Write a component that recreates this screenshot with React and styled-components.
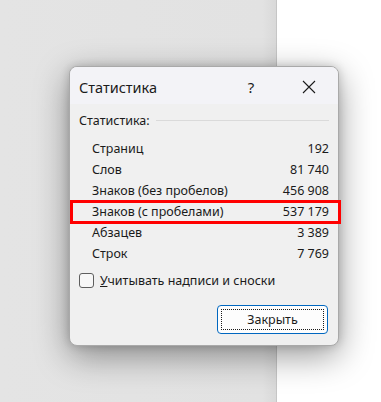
import React from "react";
import styled, { createGlobalStyle } from "styled-components";

const GlobalStyle = createGlobalStyle`
  html, body {
    margin: 0;
    padding: 0;
    width: 381px;
    height: 402px;
    overflow: hidden;
  }
  body {
    font-family: "Noto Sans", "Open Sans", sans-serif;
    color: #1b1b1b;
  }
`;

const stats = [
  { label: "Страниц", value: "192" },
  { label: "Слов", value: "81 740" },
  { label: "Знаков (без пробелов)", value: "456 908" },
  { label: "Знаков (с пробелами)", value: "537 179", marked: true },
  { label: "Абзацев", value: "3 389" },
  { label: "Строк", value: "7 769" },
];

const App = () => {
  return (
    <Page>
      <GlobalStyle />
      <DocArea />
      <Margin />
      <Dialog>
        <TitleBar>
          <Title>Статистика</Title>
          <TitleButton aria-label="help">?</TitleButton>
          <TitleButton aria-label="close">
            <svg width="14" height="14" viewBox="0 0 14 14">
              <path d="M1 1 L13 13 M13 1 L1 13" stroke="#1b1b1b" strokeWidth="1.1" />
            </svg>
          </TitleButton>
        </TitleBar>
        <Body>
          <Group>
            <GroupLabel>Статистика:</GroupLabel>
            <GroupLine />
          </Group>
          <StatList>
            {stats.map((s) => (
              <StatRow key={s.label} $marked={s.marked}>
                <span>{s.label}</span>
                <span>{s.value}</span>
              </StatRow>
            ))}
          </StatList>
          <CheckRow>
            <CheckBox />
            <span>
              <u>У</u>читывать надписи и сноски
            </span>
          </CheckRow>
          <Footer>
            <CloseButton>
              <FocusRing>Закрыть</FocusRing>
            </CloseButton>
          </Footer>
        </Body>
      </Dialog>
    </Page>
  );
};

const Page = styled.div`
  position: relative;
  display: flex;
  width: 381px;
  height: 402px;
  background: #ffffff;
`;

const DocArea = styled.div`
  width: 276px;
  height: 100%;
  background: linear-gradient(to right, #e4e4e4 0%, #e2e2e2 95%, #d9d9d9 100%);
  border-right: 1px solid #c6c6c6;
`;

const Margin = styled.div`
  flex: 1;
  background: #ffffff;
`;

const Dialog = styled.div`
  position: absolute;
  left: 69px;
  top: 66px;
  width: 270px;
  height: 280px;
  border-radius: 8px;
  background: #f0f0f0;
  border: 1px solid #a9a9a9;
  box-sizing: border-box;
  box-shadow: 0 10px 34px rgba(0, 0, 0, 0.4), 0 0 10px rgba(0, 0, 0, 0.18);
  display: flex;
  flex-direction: column;
`;

const TitleBar = styled.div`
  height: 37px;
  display: flex;
  align-items: center;
  background: #f3f3f7;
  padding-left: 9px;
  border-radius: 7px 7px 0 0;
`;

const Title = styled.div`
  flex: 1;
  font-size: 14.5px;
  padding-top: 2px;
`;

const TitleButton = styled.div`
  width: 58px;
  height: 37px;
  display: flex;
  align-items: center;
  justify-content: center;
  font-size: 15px;
  padding-top: 2px;
  box-sizing: border-box;
`;

const Body = styled.div`
  flex: 1;
  padding: 8px 9px 0 9px;
  font-size: 12.5px;
`;

const Group = styled.div`
  display: flex;
  align-items: center;
  gap: 6px;
  height: 16px;
`;

const GroupLabel = styled.span``;

const GroupLine = styled.div`
  flex: 1;
  height: 1px;
  background: #dadada;
`;

const StatList = styled.div`
  margin-top: 10px;
  padding-left: 13px;
`;

const StatRow = styled.div`
  position: relative;
  display: flex;
  justify-content: space-between;
  height: 21px;
  align-items: center;

  &::after {
    content: "";
    display: ${(p) => (p.$marked ? "block" : "none")};
    position: absolute;
    left: -22px;
    right: -12px;
    top: -1px;
    bottom: -2px;
    border: 3px solid #ff0000;
  }
`;

const CheckRow = styled.div`
  display: flex;
  align-items: center;
  gap: 6px;
  margin-top: 6px;
  height: 20px;
`;

const CheckBox = styled.div`
  width: 13px;
  height: 13px;
  border: 1px solid #5e5e5e;
  border-radius: 3px;
  background: #f7f7f7;
`;

const Footer = styled.div`
  display: flex;
  justify-content: flex-end;
  margin-top: 15px;
  padding-right: 1px;
`;

const CloseButton = styled.div`
  width: 111px;
  height: 29px;
  box-sizing: border-box;
  border: 1px solid #0067c0;
  border-radius: 4px;
  background: #fdfdfd;
  padding: 3px;
  display: flex;
`;

const FocusRing = styled.div`
  flex: 1;
  border: 1px dotted #1b1b1b;
  display: flex;
  align-items: center;
  justify-content: center;
  font-size: 12.5px;
`;

export default App;
